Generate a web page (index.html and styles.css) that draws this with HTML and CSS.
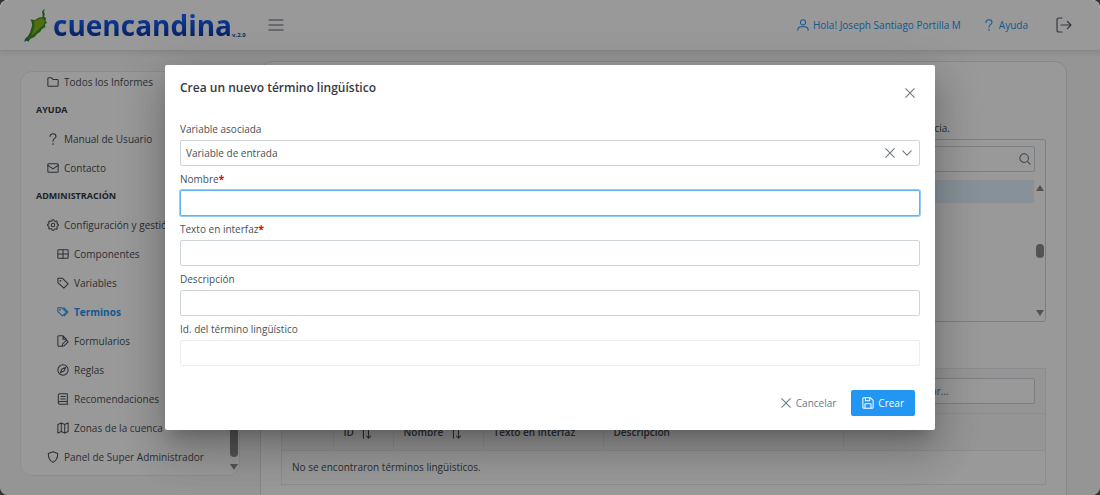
FILE: index.html
```html
<!DOCTYPE html>
<html lang="es">

<head>
    <meta charset="UTF-8">
    <meta name="viewport" content="width=device-width, initial-scale=1.0">
    <title>Cuencandina</title>
    <link rel="stylesheet" href="styles.css">
</head>

<body>
    <div class="app">
        <header class="topbar">
            <a class="logo" href="#">
                <svg class="logo-leaf" viewBox="0 0 26 36">
                    <path fill="#3f8f22" d="M22 1.500L22.600 3 21.800 5 23 7 22 9.500 24 11 23.500 13.500 25 16 23 17 23.500 20 20 22 18 25 15 27 12.500 30 8 32 6.500 34.500 4 33.500 2.500 35 3 32 6 29 8 25.500 9 22 10 19 10 17 9.500 14.500 8 12.500 13 13 17 10.500 20.500 10 20.500 7 20 4.500 21.500 3z" />
                    <path fill="#86b81e" d="M12 14L20 11 23 14 21.500 18 18 21 14 25 9 29 11 24 12.500 19z" />
                    <path fill="#1f7d6a" d="M2.500 35L3 32 5 30.500 7 32 8 32 6.500 34.500 4 33.500z" />
                </svg>
                <span class="logo-name">cuencandina</span>
                <span class="logo-version">v.2.0</span>
            </a>
            <button class="icon-button" type="button" aria-label="Menú">
                <svg class="icon-menu" viewBox="0 0 16 12"><path d="M1 1h14M1 6h14M1 11h14" /></svg>
            </button>
            <nav class="topbar-menu">
                <a href="#">
                    <svg class="icon" viewBox="0 0 14 14"><circle cx="7" cy="4" r="3" /><path d="M1 13c0-2.500 2-4 4-4h4c2 0 4 1.500 4 4" /></svg>
                    Hola! Joseph Santiago Portilla M
                </a>
                <a href="#">
                    <svg class="icon" viewBox="0 0 14 14"><path d="M3.500 4C3.500 2 5 1 7 1s3.500 1.200 3.500 3C10.500 6.500 7 6 7 9.500M7 12v1.500" /></svg>
                    Ayuda
                </a>
                <button class="icon-button" type="button" aria-label="Salir">
                    <svg class="icon-exit" viewBox="0 0 16 16"><path d="M6 1H3Q1 1 1 3v10q0 2 2 2h3M5 8h10M11.500 4.500L15 8l-3.500 3.500" /></svg>
                </button>
            </nav>
        </header>

        <div class="layout">
            <aside class="sidebar">
                <nav class="menu">
                    <a class="menu-item" href="#">
                        <svg class="icon" viewBox="0 0 14 14"><path d="M1 11V3q0-1 1-1h3l2 2h5q1 0 1 1v6q0 1-1 1H2q-1 0-1-1z" /></svg>
                        Todos los Informes
                    </a>
                    <h2 class="menu-title">AYUDA</h2>
                    <a class="menu-item" href="#">
                        <svg class="icon" viewBox="0 0 14 14"><path d="M3.500 4C3.500 2 5 1 7 1s3.500 1.200 3.500 3C10.500 6.500 7 6 7 9.500M7 12v1.500" /></svg>
                        Manual de Usuario
                    </a>
                    <a class="menu-item" href="#">
                        <svg class="icon" viewBox="0 0 14 14"><rect x="1" y="2" width="12" height="10" rx="1" /><path d="M1 4l6 4 6-4" /></svg>
                        Contacto
                    </a>
                    <h2 class="menu-title">ADMINISTRACIÓN</h2>
                    <a class="menu-item" href="#">
                        <svg class="icon" viewBox="0 0 14 14"><circle cx="7" cy="7" r="2" /><path d="M6 1h2l.5 1.500 1 .4L11 2.200l1.200 1.300-.6 1.400.4.9 1.200.4v1.800l-1.300.5-.4 1 .6 1.400-1.300 1.200-1.400-.6-.9.4L8 13H6l-.5-1.400-1-.4-1.400.6-1.300-1.200.6-1.400-.4-1L.7 8V6.200L2 5.800l.4-.9-.6-1.400L3 2.200l1.500.7 1-.4z" /></svg>
                        Configuración y gestión
                    </a>
                    <a class="menu-item sub" href="#">
                        <svg class="icon" viewBox="0 0 14 14"><rect x="1" y="2" width="12" height="10" rx="1" /><path d="M1 7h12M7 2v10" /></svg>
                        Componentes
                    </a>
                    <a class="menu-item sub" href="#">
                        <svg class="icon" viewBox="0 0 14 14"><path d="M1 1.500h5.500L13 8l-5 5L1 6.500z" /><circle cx="4" cy="4.500" r=".5" /></svg>
                        Variables
                    </a>
                    <a class="menu-item sub active" href="#">
                        <svg class="icon" viewBox="0 0 14 14"><path d="M1 2h4.500L11 7l-4.500 4.500L1 6.500zM8 2l5 5-4.500 4.500" /><circle cx="3.500" cy="4.500" r=".5" /></svg>
                        Terminos
                    </a>
                    <a class="menu-item sub" href="#">
                        <svg class="icon" viewBox="0 0 14 14"><path d="M5 13H2q-1 0-1-1V2q0-1 1-1h5l4 4M7 1v4h4M6 13l.5-2.500L11 6l2 2-4.500 4.500z" /></svg>
                        Formularios
                    </a>
                    <a class="menu-item sub" href="#">
                        <svg class="icon" viewBox="0 0 14 14"><circle cx="7" cy="7" r="6" /><path d="M10 4L8.200 8.200 4 10l1.800-4.200z" /></svg>
                        Reglas
                    </a>
                    <a class="menu-item sub" href="#">
                        <svg class="icon" viewBox="0 0 14 14"><path d="M12 10V1H3Q1.500 1 1.500 2.500v9Q1.500 13 3 13h9.500M12 10H3q-1.500 0-1.500 1.500M12 10v3M4.500 4H9.500M4.500 7h5" /></svg>
                        Recomendaciones
                    </a>
                    <a class="menu-item sub" href="#">
                        <svg class="icon" viewBox="0 0 14 14"><path d="M1 3l4-2 4 2 4-2v10l-4 2-4-2-4 2zM5 1v10M9 3v10" /></svg>
                        Zonas de la cuenca
                    </a>
                    <a class="menu-item" href="#">
                        <svg class="icon" viewBox="0 0 14 14"><path d="M7 1l5.500 2C12.500 8 11 11.500 7 13.300 3 11.500 1.500 8 1.500 3z" /></svg>
                        Panel de Super Administrador
                    </a>
                </nav>
                <div class="scrollbar">
                    <span class="thumb thumb-long"></span>
                    <span class="arrow-down"></span>
                </div>
            </aside>

            <main class="card">
                <p class="intro">referencia.</p>

                <section class="listbox">
                    <div class="listbox-filter">
                        <input class="field-input" type="text" aria-label="Filtrar">
                        <svg class="icon icon-search" viewBox="0 0 14 14"><circle cx="6" cy="6" r="5" /><path d="M10 10l3 3" /></svg>
                    </div>
                    <div class="listbox-body">
                        <div class="listbox-option"></div>
                        <div class="scrollbar">
                            <span class="arrow-up"></span>
                            <span class="thumb"></span>
                            <span class="arrow-down"></span>
                        </div>
                    </div>
                </section>

                <section class="datatable">
                    <div class="datatable-header">
                        <input class="field-input" type="text" placeholder="Buscar..." aria-label="Buscar">
                    </div>
                    <table>
                        <thead>
                            <tr>
                                <th class="col-check"></th>
                                <th class="col-id">ID <svg class="icon" viewBox="0 0 14 14"><path d="M4 13V1M1.500 3.500L4 1l2.500 2.500M10 1v12M7.500 10.500L10 13l2.500-2.500" /></svg></th>
                                <th class="col-name">Nombre <svg class="icon" viewBox="0 0 14 14"><path d="M4 13V1M1.500 3.500L4 1l2.500 2.500M10 1v12M7.500 10.500L10 13l2.500-2.500" /></svg></th>
                                <th class="col-text">Texto en interfaz</th>
                                <th class="col-desc">Descripción</th>
                                <th></th>
                            </tr>
                        </thead>
                        <tbody>
                            <tr>
                                <td colspan="6">No se encontraron términos lingüisticos.</td>
                            </tr>
                        </tbody>
                    </table>
                </section>
            </main>
        </div>

        <div class="mask">
            <form class="dialog" role="dialog" aria-labelledby="dialog-title">
                <div class="dialog-header">
                    <h1 id="dialog-title">Crea un nuevo término lingüístico</h1>
                    <button class="icon-button dialog-close" type="button" aria-label="Cerrar">
                        <svg class="icon" viewBox="0 0 14 14"><path d="M2 2l10 10M12 2L2 12" /></svg>
                    </button>
                </div>

                <div class="dialog-content">
                    <label for="variable">Variable asociada</label>
                    <div class="dropdown">
                        <select class="field-input" id="variable">
                            <option>Variable de entrada</option>
                        </select>
                        <div class="dropdown-icons">
                            <button class="icon-button" type="button" aria-label="Limpiar">
                                <svg class="icon" viewBox="0 0 14 14"><path d="M2 2l10 10M12 2L2 12" /></svg>
                            </button>
                            <svg class="icon" viewBox="0 0 14 14"><path d="M2 4.500l5 5 5-5" /></svg>
                        </div>
                    </div>

                    <label for="nombre">Nombre<b class="required">*</b></label>
                    <input class="field-input focused" id="nombre" type="text">

                    <label for="texto">Texto en interfaz<b class="required">*</b></label>
                    <input class="field-input" id="texto" type="text">

                    <label for="descripcion">Descripción</label>
                    <input class="field-input" id="descripcion" type="text">

                    <label for="id-termino">Id. del término lingüístico</label>
                    <input class="field-input" id="id-termino" type="text" disabled>
                </div>

                <div class="dialog-footer">
                    <button class="button button-text" type="button">
                        <svg class="icon" viewBox="0 0 14 14"><path d="M2 2l10 10M12 2L2 12" /></svg>
                        Cancelar
                    </button>
                    <button class="button button-primary" type="submit">
                        <svg class="icon" viewBox="0 0 14 14"><path d="M1 2q0-1 1-1h8l3 3v8q0 1-1 1H2q-1 0-1-1zM4 1v3.500h5V1M3.500 13V8h7v5" /></svg>
                        Crear
                    </button>
                </div>
            </form>
        </div>
    </div>
</body>

</html>
```
FILE: styles.css
```css
* {
    box-sizing: border-box;
    margin: 0;
    padding: 0;
}

body {
    background: #333;
    font-family: "Open Sans", "Noto Sans", sans-serif;
    font-size: 10px;
    line-height: 16px;
    color: #495057;
}

a {
    color: inherit;
    text-decoration: none;
}

input,
select,
button {
    font: inherit;
    color: inherit;
}

.app {
    position: relative;
    height: 100vh;
    display: flex;
    flex-direction: column;
    overflow: hidden;
    border-radius: 8px;
    background: #f8f9fa;
}

/* iconos */
.icon,
.icon-menu,
.icon-exit {
    flex: none;
    width: 12px;
    height: 12px;
    fill: none;
    stroke: currentColor;
    stroke-width: 1.2;
    stroke-linecap: round;
    stroke-linejoin: round;
}

.icon-menu {
    width: 16px;
    height: 12px;
}

.icon-exit {
    width: 16px;
    height: 16px;
}

.icon-button {
    display: flex;
    border: none;
    background: none;
    cursor: pointer;
}

/* barra superior */
.topbar {
    flex: none;
    height: 51px;
    padding: 0 28px 0 22px;
    display: flex;
    align-items: center;
    background: #fff;
    border-bottom: 1px solid #dee2e6;
    box-shadow: 0 2px 6px rgba(0, 0, 0, 0.1);
}

.logo {
    display: flex;
    align-items: center;
    margin-right: 22px;
}

.logo-leaf {
    width: 26px;
    height: 36px;
    margin-right: 5px;
}

.logo-name {
    font-size: 28px;
    line-height: 36px;
    font-weight: 700;
    color: transparent;
    background: linear-gradient(#1a63ff 30%, #0b3aa8 80%);
    background-clip: text;
    -webkit-background-clip: text;
}

.logo-version {
    align-self: flex-end;
    font-size: 6px;
    line-height: 16px;
    font-weight: 700;
    color: #1b4a9c;
}

.topbar-menu {
    display: flex;
    align-items: center;
    gap: 22px;
    margin-left: auto;
    color: #2196f3;
}

.topbar-menu a {
    display: flex;
    align-items: center;
    gap: 4px;
}

.topbar-menu .icon-button {
    margin-left: 6px;
}

.topbar .icon-button {
    color: #5c636a;
}

.layout {
    flex: 1;
    min-height: 0;
    display: flex;
    align-items: flex-start;
    gap: 20px;
    padding: 10px 33px 0 20px;
}

/* menu lateral */
.sidebar {
    flex: none;
    display: flex;
    width: 220px;
    height: calc(100vh - 90px);
    margin-top: 10px;
    overflow: hidden;
    background: #fff;
    border: 1px solid #e9ecef;
    border-radius: 12px;
}

.menu {
    flex: 1;
    min-width: 0;
    display: flex;
    flex-direction: column;
    justify-content: flex-end;
    padding: 0 0 4px 15px;
    white-space: nowrap;
}

.menu-item {
    flex: none;
    display: flex;
    align-items: center;
    gap: 5px;
    height: 29px;
    padding-left: 11px;
}

.menu-item.sub {
    padding-left: 21px;
}

.menu-item.active {
    font-weight: 700;
    color: #2196f3;
}

.menu-title {
    flex: none;
    font-size: 9px;
    line-height: 28px;
    font-weight: 700;
    color: #343a40;
}

.scrollbar {
    flex: none;
    width: 11px;
    display: flex;
    flex-direction: column;
    align-items: center;
    justify-content: space-between;
    padding: 5px 0;
}

.thumb {
    width: 8px;
    height: 14px;
    border-radius: 4px;
    background: #8b8b8b;
}

.thumb-long {
    height: 160px;
    margin: auto 0 7px;
}

.arrow-up,
.arrow-down {
    border: 4px solid transparent;
    border-top: 6px solid #8b8b8b;
    border-bottom: none;
}

.arrow-up {
    border-top: none;
    border-bottom: 6px solid #8b8b8b;
}

/* contenido */
.card {
    flex: 1;
    min-width: 0;
    min-height: 460px;
    padding: 58px 20px 0;
    background: #fff;
    border: 1px solid #dee2e6;
    border-radius: 12px;
}

.intro {
    padding-right: 96px;
    text-align: right;
}

.listbox {
    margin-top: 3px;
    border: 1px solid #ced4da;
    border-radius: 3px;
}

.listbox-filter {
    position: relative;
    padding: 6px 10px;
}

.icon-search {
    position: absolute;
    top: 13px;
    right: 14px;
    color: #6c757d;
}

.listbox-body {
    display: flex;
    height: 141px;
    margin-top: 2px;
}

.listbox-option {
    flex: 1;
    height: 23px;
    background: #e3f2fd;
}

.datatable {
    margin-top: 46px;
    border: 1px solid #e9ecef;
}

.datatable-header {
    display: flex;
    justify-content: flex-end;
    padding: 9px 10px;
    background: #f8f9fa;
    border-bottom: 1px solid #e9ecef;
}

.datatable-header .field-input {
    width: 132px;
}

table {
    width: 100%;
    border-collapse: collapse;
    table-layout: fixed;
}

th {
    height: 36px;
    padding: 0 10px;
    text-align: left;
    font-weight: 600;
    white-space: nowrap;
    background: #f8f9fa;
    border-right: 1px solid #e9ecef;
}

th:last-child {
    border-right: none;
}

th .icon {
    margin-left: 4px;
    vertical-align: middle;
}

td {
    height: 34px;
    padding: 0 10px;
    border-top: 1px solid #e9ecef;
}

.col-check {
    width: 51px;
}

.col-id {
    width: 60px;
}

.col-name {
    width: 90px;
}

.col-text {
    width: 120px;
}

.col-desc {
    width: 240px;
}

/* dialogo */
.mask {
    position: absolute;
    inset: 0;
    display: flex;
    align-items: center;
    justify-content: center;
    background: rgba(0, 0, 0, 0.4);
}

.dialog {
    width: 70%;
    background: #fff;
    border-radius: 2px;
    box-shadow: 0 11px 15px -7px rgba(0, 0, 0, 0.2), 0 24px 38px 3px rgba(0, 0, 0, 0.14), 0 9px 46px 8px rgba(0, 0, 0, 0.12);
}

.dialog-header {
    display: flex;
    justify-content: space-between;
    padding: 15px 19px 0 15px;
    color: #343a40;
}

.dialog-header h1 {
    font-size: 12px;
    line-height: 16px;
    font-weight: 600;
}

.dialog-close {
    padding: 7px 0;
    color: #6c757d;
}

.dialog-content {
    display: flex;
    flex-direction: column;
    padding: 10px 15px 0;
}

.dialog-content label {
    height: 24px;
    padding-top: 5px;
}

.required {
    color: #e00;
}

.field-input {
    display: block;
    width: 100%;
    height: 26px;
    padding: 0 5px;
    background: #fff;
    border: 1px solid #ced4da;
    border-radius: 2px;
    outline: none;
}

.field-input:disabled {
    border-color: #ebedef;
}

.focused {
    border-color: #63b3f0;
    box-shadow: 0 0 0 1px #93cbf9;
}

.dropdown {
    position: relative;
}

.dropdown select {
    appearance: none;
}

.dropdown-icons {
    position: absolute;
    top: 7px;
    right: 7px;
    display: flex;
    gap: 5px;
    color: #6c757d;
}

.dialog-footer {
    display: flex;
    justify-content: flex-end;
    gap: 4px;
    padding: 24px 20px 14px;
}

.button {
    display: flex;
    align-items: center;
    gap: 4px;
    height: 26px;
    padding: 0 11px;
    border: none;
    border-radius: 2px;
    cursor: pointer;
}

.button-text {
    background: none;
    color: #607d8b;
}

.button-primary {
    background: #2196f3;
    color: #fff;
}
```
